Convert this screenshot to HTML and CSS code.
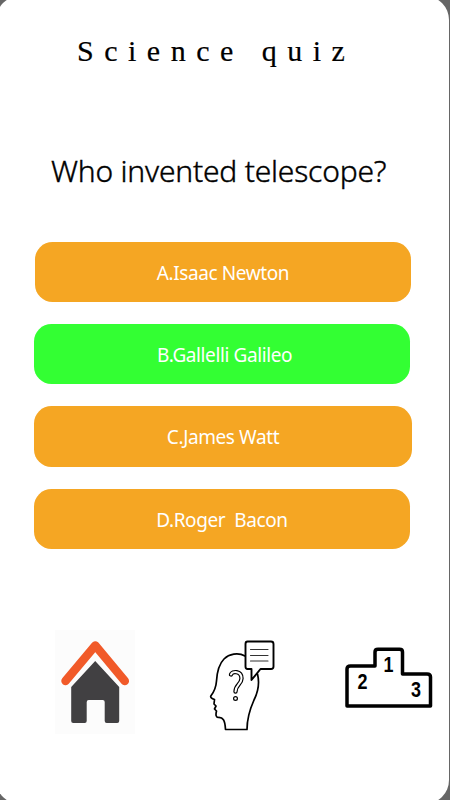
FILE: index.html
```
<!DOCTYPE html>
<html lang="en">
<head>
<meta charset="utf-8">
<title>Science quiz</title>
<link rel="stylesheet" href="styles.css">
</head>
<body>
<main class="screen">
  <h1 class="title">Science quiz</h1>
  <h2 class="question">Who invented telescope?</h2>
  <div class="answers">
    <button class="answer answer-a"><span>A.Isaac Newton</span></button>
    <button class="answer answer-b correct"><span>B.Gallelli Galileo</span></button>
    <button class="answer answer-c"><span>C.James Watt</span></button>
    <button class="answer answer-d"><span>D.Roger&nbsp; Bacon</span></button>
  </div>
  <nav class="nav">
    <a class="home" aria-label="Home">
      <svg width="80" height="104" viewBox="0 0 80 104">
        <path d="M10.500 51L40.300 15.500L69.800 51" fill="none" stroke="#f15a29" stroke-width="8.500" stroke-linecap="round" stroke-linejoin="round"/>
        <path d="M40.500 31L64.500 57V91q0 2-2 2H52q-2 0-2-2V72q0-2-2-2H34q-2 0-2 2v19q0 2-2 2H18.500q-2 0-2-2V57z" fill="#414042" transform="translate(-.3 0)"/>
      </svg>
    </a>
    <a class="ask" aria-label="Question">
      <svg width="90" height="110" viewBox="0 0 90 110" fill="none" stroke="#000" stroke-linejoin="round" stroke-linecap="round">
        <path d="M45 26C38 22 29 24 24 29C18 35 17 43 16.500 51C16 58 14 62 10.800 66Q10 68 14.500 69.500L14 74L16 76L14.500 79L16.500 81Q15 87 18 87.500C23 87 25 90 25.500 99.500H47C47 88 50 79 54 70C59 60 59.500 52 57.500 44" stroke-width="1.700"/>
        <path d="M47.500 11.500H71Q73.500 11.500 73.500 14V36.500Q73.500 39 71 39H60.500L51.500 50V39H47.500Q45.500 39 45.500 36.500V14Q45.500 11.500 47.500 11.500z" fill="#fff" stroke-width="1.900"/>
        <path d="M50.500 19.500H68M50.500 25.500H68M50.500 31H68" stroke-width="1.100" stroke="#333"/>
        <path d="M31 44.500C32 41 41.500 40.500 41.500 48.500C41.500 54 35.500 55 35.500 61.500" stroke-width="4.400"/>
        <path d="M31 44.500C32 41 41.500 40.500 41.500 48.500C41.500 54 35.500 55 35.500 61.500" stroke="#fff" stroke-width="2"/>
        <circle cx="35.500" cy="68.500" r="1.900" stroke-width="1.200"/>
      </svg>
    </a>
    <a class="ranking" aria-label="Ranking">
      <svg width="90" height="64" viewBox="0 0 90 64">
        <path d="M3 59V22Q3 19 6.500 19H31V5Q31 2.300 34 2.300H55.500Q58.500 2.300 58.500 5V27H83Q86.500 27 86.500 30V59z" fill="none" stroke="#000" stroke-width="3.500" stroke-linejoin="round"/>
        <g class="rank-label"><text x="13.500" y="42" textLength="10" lengthAdjust="spacingAndGlyphs">2</text><text x="39.500" y="25" textLength="10" lengthAdjust="spacingAndGlyphs">1</text><text x="67" y="50" textLength="10" lengthAdjust="spacingAndGlyphs">3</text></g>
      </svg>
    </a>
  </nav>
</main>
</body>
</html>
```
FILE: styles.css
```
* { box-sizing: border-box; }
body { margin: 0; height: 800px; overflow: hidden; background: #666; }
.screen {
  width: 452.6px; height: 808px; margin: -4px 0 0 -4px;
  padding-left: 4px; border-radius: 24px; background: #fff;
  display: flex; flex-direction: column;
}
.title {
  margin: 35px 0 0 77px; height: 40px;
  font: 400 30px/40px "Liberation Serif", serif;
  -webkit-text-stroke: .2px #000;
  letter-spacing: 10.500px; white-space: nowrap;
}
.question {
  margin: 80px 0 0 51px; height: 40px;
  font: 350 30px/40px "Noto Sans", "Open Sans", sans-serif;
  -webkit-text-stroke: .4px #000;
  letter-spacing: -.2px; white-space: nowrap;
}
.answers { margin: 50.500px 0 0 34px; display: grid; grid-template-rows: 60px 60px 61.500px 60px; row-gap: 22px; }
.answer {
  border: 0; padding: 2px 0 0; width: 376px; border-radius: 17.500px;
  background: #f5a623; color: #fff;
  font: 400 19px/26px "Noto Sans", "Open Sans", sans-serif;
  letter-spacing: -.4px; white-space: nowrap;
}
.answer-a { width: 376px; margin-left: 1px; }
.answer-b { padding-left: 5px; }
.answer-c { width: 378px; }
.answer-d { margin-top: -.500px; }
.correct { background: #33ff33; }
.nav { display: flex; align-items: flex-start; margin-top: 81px; }
.nav svg { display: block; }
.home { margin-left: 55px; background: #fcfcfc; }
.ask { margin-left: 65px; }
.ranking { margin: 17px 0 0 54px; }
.rank-label { font: bold 22px "Liberation Sans", sans-serif; }
```
